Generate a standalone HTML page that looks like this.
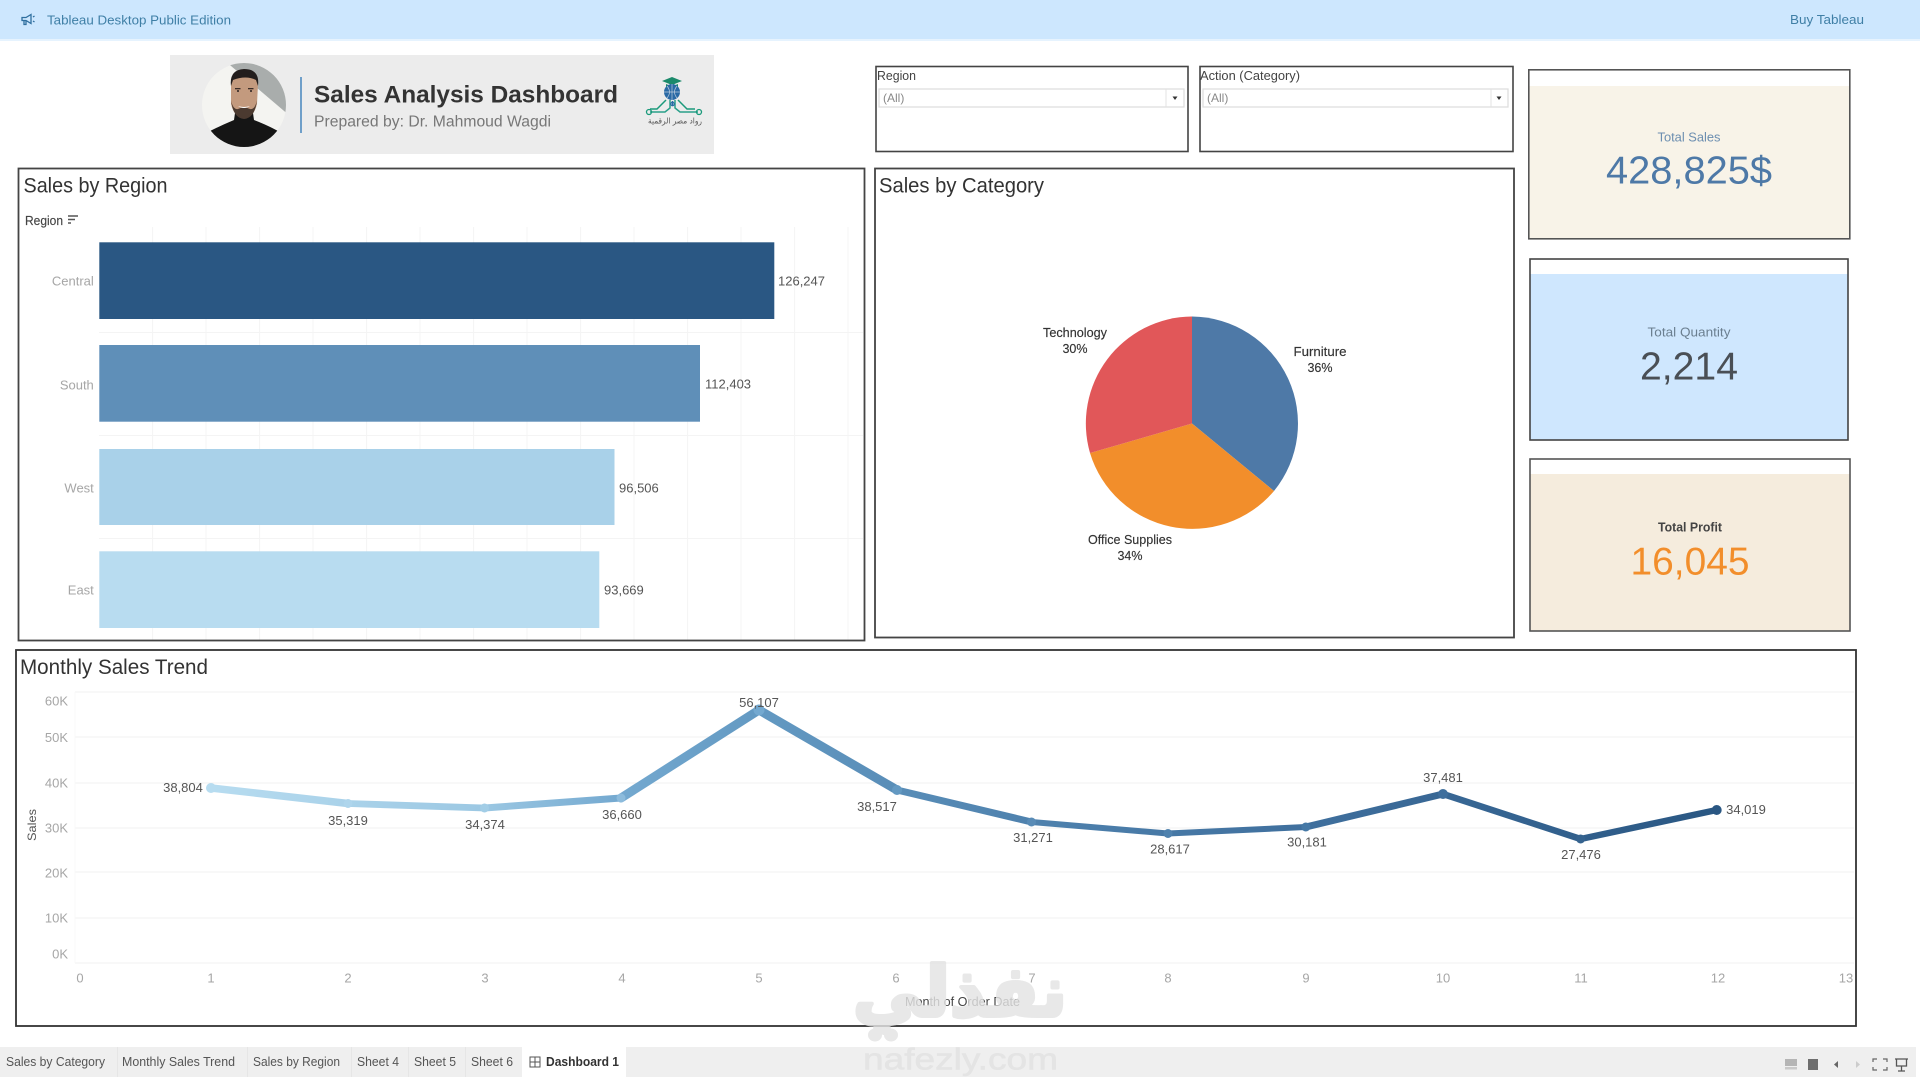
<!DOCTYPE html>
<html lang="en"><head><meta charset="utf-8"><title>Dashboard 1</title>
<style>
html,body{margin:0;padding:0;background:#fff;width:1920px;height:1077px;overflow:hidden}
svg{display:block;font-family:"Liberation Sans",sans-serif;filter:blur(.35px)}
text{dominant-baseline:central}
.m{text-anchor:middle}.e{text-anchor:end}
.t{font-size:21px;fill:#333}
.v{font-size:13px;fill:#555}
.a{font-size:13px;fill:#a6a6a6}
.p{font-size:12.5px;fill:#333;text-anchor:middle;stroke:#333;stroke-width:.15}
.tab{font-size:12.5px;fill:#555}
</style></head><body>
<svg width="1920" height="1077" viewBox="0 0 1920 1077" xmlns="http://www.w3.org/2000/svg">
<defs>
<linearGradient id="lg" gradientUnits="userSpaceOnUse" x1="211" y1="0" x2="1717" y2="0">
<stop offset="0" stop-color="#b7dcf0"/><stop offset=".18" stop-color="#9cc8e3"/><stop offset=".27" stop-color="#74a9d0"/><stop offset=".365" stop-color="#6399c2"/><stop offset=".54" stop-color="#4f82ae"/><stop offset=".73" stop-color="#3f6f9d"/><stop offset="1" stop-color="#2a5783"/>
</linearGradient>
<clipPath id="cp"><circle cx="244" cy="105" r="42"/></clipPath>
</defs>

<rect width="1920" height="39" fill="#cde7fe"/>
<rect y="39" width="1920" height="2" fill="#e6f3fe"/>
<g fill="none" stroke="#2f6f9f" stroke-width="1.3"><path d="M22 17.5h4l5-3v9l-5-3h-4zM24 20.5v4h2v-4M33 17l1.5-1M33 21l1.5 1"/></g>
<text x="47" y="20" textLength="184" lengthAdjust="spacingAndGlyphs" font-size="13" fill="#3f7fa6">Tableau Desktop Public Edition</text>
<text x="1790" y="19.500" textLength="74" lengthAdjust="spacingAndGlyphs" font-size="13" fill="#3f7fa6">Buy Tableau</text>

<!-- banner -->
<rect x="170" y="55" width="544" height="99" fill="#ececec"/>
<g clip-path="url(#cp)">
<rect x="200" y="60" width="90" height="90" fill="#f4f4f1"/>
<path d="M224 60L290 116V60Z" fill="#a9adac"/>
<path d="M205 150L210 131Q222 125 234 120L235 113H253L254 120Q267 125 278 131L284 150Z" fill="#151515"/>
<path d="M231 84Q231 72 244 72Q258 72 258 84L257 104Q254 117 244 118Q234 117 231 104Z" fill="#c39a7e"/>
<path d="M231 100Q233 118 244 119Q255 118 257 100Q255 110 250 109Q244 106 238 109Q233 110 231 100Z" fill="#4b3a30"/>
<path d="M231 86Q229 70 244 69Q260 69 258 86L256 80Q246 75 233 80Z" fill="#231e1d"/>
<path d="M238 106Q244 110 250 106Q244 108 238 106Z" fill="#fff"/>
<rect x="235" y="88" width="5.500" height="1.300" fill="#3a2c26"/><rect x="248" y="88" width="5.500" height="1.300" fill="#3a2c26"/>
<circle cx="238" cy="91" r="1" fill="#2a2020"/><circle cx="251" cy="91" r="1" fill="#2a2020"/>
</g>
<rect x="300" y="77" width="2" height="56" fill="#6f9fc9"/>
<text x="314" y="95" textLength="304" lengthAdjust="spacingAndGlyphs" font-size="24" font-weight="700" fill="#333">Sales Analysis Dashboard</text>
<text x="314" y="122" textLength="237" lengthAdjust="spacingAndGlyphs" font-size="15.500" fill="#777">Prepared by: Dr. Mahmoud Wagdi</text>
<!-- logo -->
<g>
<path d="M662 81L672 77L682 81L672 85Z" fill="#1b8a6b"/><path d="M666 84v3h12v-3l-6 2.500z" fill="#1b8a6b"/>
<circle cx="672" cy="92" r="8" fill="#2a6aa5"/>
<path d="M664 92h16M672 84v16M667 86q5 6 0 12M677 86q-5 6 0 12" stroke="#bcd" stroke-width=".7" fill="none"/>
<g fill="none" stroke-width="1.500"><path d="M666 100L657 109H650" stroke="#1b9a7b"/><path d="M678 100L687 109H695" stroke="#1b9a7b"/><path d="M670 100V108L665 112H650" stroke="#29a08a"/><path d="M675 100V108L680 112H698" stroke="#29a08a"/><path d="M672.500 101V106" stroke="#2a6aa5"/></g>
<circle cx="649" cy="112" r="2.500" fill="none" stroke="#1b9a7b" stroke-width="1.300"/><circle cx="699" cy="112" r="2.500" fill="none" stroke="#1b9a7b" stroke-width="1.300"/><circle cx="672.500" cy="104" r="1.800" fill="none" stroke="#2a6aa5" stroke-width="1.100"/>
<text x="675" y="121" class="m" font-size="8" fill="#555" textLength="54" lengthAdjust="spacingAndGlyphs" style="font-family:'DejaVu Sans',sans-serif">رواد مصر الرقمية</text>
</g>

<!-- filters -->
<g fill="#fff" stroke="#444" stroke-width="1.600"><rect x="876" y="66.500" width="312" height="85"/><rect x="1200" y="66.500" width="313" height="85"/></g>
<text x="877" y="76" textLength="39" lengthAdjust="spacingAndGlyphs" font-size="12.500" fill="#444">Region</text>
<text x="1200" y="76" textLength="100" lengthAdjust="spacingAndGlyphs" font-size="12.500" fill="#444">Action (Category)</text>
<g fill="#fff" stroke="#dcdcdc" stroke-width="1.200"><rect x="879" y="89" width="305" height="18"/><rect x="1203" y="89" width="305" height="18"/></g>
<path d="M1166 89v18M1491 89v18" stroke="#e3e3e3"/>
<path d="M1172.500 96.500h5l-2.500 3.500zM1496.500 96.500h5l-2.500 3.500z" fill="#333"/>
<text x="883" y="98" font-size="12" fill="#888">(All)</text><text x="1207" y="98" font-size="12" fill="#888">(All)</text>

<!-- KPI cards -->
<rect x="1529" y="86" width="321" height="152" fill="#f8f3e8"/>
<rect x="1528.800" y="69.800" width="321" height="169" fill="none" stroke="#555" stroke-width="1.600"/>
<text x="1689" y="137" class="m" font-size="13" fill="#6c8eb0" textLength="63" lengthAdjust="spacingAndGlyphs">Total Sales</text>
<text x="1689" y="171" class="m" font-size="39" fill="#4e79a7" textLength="166" lengthAdjust="spacingAndGlyphs">428,825$</text>

<rect x="1530" y="274" width="318" height="166" fill="#cfe7fe"/>
<rect x="1530" y="259" width="318" height="181" fill="none" stroke="#444" stroke-width="1.600"/>
<text x="1689" y="332" class="m" font-size="13" fill="#6b7f90" textLength="83" lengthAdjust="spacingAndGlyphs">Total Quantity</text>
<text x="1689" y="367" class="m" font-size="39" fill="#4a4f55" textLength="98" lengthAdjust="spacingAndGlyphs">2,214</text>

<rect x="1530" y="474" width="320" height="157" fill="#f5ecdd"/>
<rect x="1530" y="459" width="320" height="172" fill="none" stroke="#555" stroke-width="1.600"/>
<text x="1690" y="527" class="m" font-size="13" font-weight="700" fill="#444" textLength="64" lengthAdjust="spacingAndGlyphs">Total Profit</text>
<text x="1690" y="562" class="m" font-size="39" fill="#f28e2b" textLength="119" lengthAdjust="spacingAndGlyphs">16,045</text>

<!-- Sales by Region -->
<g stroke="#f4f4f4" stroke-width="1">
<path d="M152.600 227V640M206 227V640M259.600 227V640M313 227V640M366.600 227V640M420 227V640M473.600 227V640M527 227V640M580.600 227V640M634 227V640M687.600 227V640M741 227V640M794.600 227V640M848 227V640"/>
<path d="M99 332.500H863M99 435.500H863M99 538.500H863"/>
</g>
<rect x="99.300" y="242.300" width="675" height="76.700" fill="#2a5783"/>
<rect x="99.300" y="345" width="600.700" height="76.700" fill="#5f8fb8"/>
<rect x="99.300" y="449" width="515.200" height="76" fill="#a9d1e9"/>
<rect x="99.300" y="551.300" width="500" height="76.700" fill="#b8dcf0"/>
<rect x="18.500" y="168.500" width="846" height="472" fill="none" stroke="#444" stroke-width="1.800"/>
<text x="23.500" y="186" class="t" textLength="144" lengthAdjust="spacingAndGlyphs">Sales by Region</text>
<text x="25" y="221" font-size="12.500" fill="#444" textLength="38" lengthAdjust="spacingAndGlyphs" stroke="#444" stroke-width=".15">Region</text>
<path d="M68 216h10M68 219.500h7M68 223h3" stroke="#555" stroke-width="1.500"/>
<g class="a"><text x="93.800" y="281" class="a e">Central</text><text x="93.800" y="385" class="a e">South</text><text x="93.800" y="488" class="a e">West</text><text x="93.800" y="590" class="a e">East</text></g>
<text x="778" y="281" class="v">126,247</text><text x="705" y="384" class="v">112,403</text><text x="619" y="488" class="v">96,506</text><text x="604" y="590" class="v">93,669</text>

<!-- Sales by Category -->
<rect x="875" y="168.500" width="639" height="469" fill="none" stroke="#444" stroke-width="1.800"/>
<text x="879" y="186" class="t" textLength="165" lengthAdjust="spacingAndGlyphs">Sales by Category</text>
<path d="M1192 423.500V316.500A107 107 0 0 1 1274 491Z" fill="#4e79a7"/>
<path d="M1192 423.500L1274 491A107 107 0 0 1 1090 453Z" fill="#f28e2b"/>
<path d="M1192 423.500L1090 453A107 107 0 0 1 1192 316.500Z" fill="#e15759"/>
<text x="1075" y="333" class="p" textLength="64" lengthAdjust="spacingAndGlyphs">Technology</text><text x="1075" y="349" class="p">30%</text>
<text x="1320" y="352" class="p" textLength="53" lengthAdjust="spacingAndGlyphs">Furniture</text><text x="1320" y="368" class="p">36%</text>
<text x="1130" y="540" class="p" textLength="84" lengthAdjust="spacingAndGlyphs">Office Supplies</text><text x="1130" y="556" class="p">34%</text>

<!-- Lower section -->
<g transform="translate(0 -3)">
<rect x="16" y="653" width="1840" height="376" fill="none" stroke="#333" stroke-width="1.800"/>
<text x="20" y="670.500" class="t" textLength="188" lengthAdjust="spacingAndGlyphs" fill="#333">Monthly Sales Trend</text>
<g stroke="#f3f3f3" stroke-width="1.200"><path d="M75 695H1854M75 740H1854M75 786H1854M75 831H1854M75 875H1854M75 921H1854M75 966H1854"/></g>
<path d="M75 695V966" stroke="#f8f8f8"/>
<g class="a">
<text x="68" y="704" class="a e">60K</text><text x="68" y="740.500" class="a e">50K</text><text x="68" y="786" class="a e">40K</text><text x="68" y="831" class="a e">30K</text><text x="68" y="876" class="a e">20K</text><text x="68" y="921" class="a e">10K</text><text x="68" y="957" class="a e">0K</text>
</g>
<text transform="translate(32 828) rotate(-90)" class="m" font-size="12" fill="#555" textLength="32" lengthAdjust="spacingAndGlyphs">Sales</text>
<g class="a">
<text x="80" y="981" class="a m">0</text><text x="211" y="981" class="a m">1</text><text x="348" y="981" class="a m">2</text><text x="485" y="981" class="a m">3</text><text x="622" y="981" class="a m">4</text><text x="759" y="981" class="a m">5</text><text x="896" y="981" class="a m">6</text><text x="1032" y="981" class="a m">7</text><text x="1168" y="981" class="a m">8</text><text x="1306" y="981" class="a m">9</text><text x="1443" y="981" class="a m">10</text><text x="1581" y="981" class="a m">11</text><text x="1718" y="981" class="a m">12</text><text x="1846" y="981" class="a m">13</text>
</g>
<g fill="none" stroke="url(#lg)" stroke-linecap="round">
<path d="M211 791L348 806.500" stroke-width="7.500"/>
<path d="M348 806.500L484.500 811" stroke-width="6.800"/>
<path d="M484.500 811L621 801" stroke-width="7"/>
<path d="M621 801L759 713" stroke-width="9"/>
<path d="M759 713L897 793" stroke-width="9"/>
<path d="M897 793L1031.500 825" stroke-width="7"/>
<path d="M1031.500 825L1168 836.500" stroke-width="6"/>
<path d="M1168 836.500L1305.800 830" stroke-width="6"/>
<path d="M1305.800 830L1443 797" stroke-width="7"/>
<path d="M1443 797L1580.600 842" stroke-width="6.500"/>
<path d="M1580.600 842L1716.700 813" stroke-width="6.500"/>
</g>
<g>
<circle cx="211" cy="791" r="5" fill="#b7dcf0"/><circle cx="348" cy="806.500" r="4.500" fill="#aed5ec"/><circle cx="484.500" cy="811" r="4.500" fill="#a2cde6"/><circle cx="621" cy="801" r="4.500" fill="#8cbbdc"/><circle cx="759" cy="713" r="5.500" fill="#74a9d0"/><circle cx="897" cy="793" r="5" fill="#6399c2"/><circle cx="1031.500" cy="825" r="4.500" fill="#588bb6"/><circle cx="1168" cy="836.500" r="4.500" fill="#4f82ae"/><circle cx="1305.800" cy="830" r="4.500" fill="#4679a6"/><circle cx="1443" cy="797" r="5" fill="#3f6f9d"/><circle cx="1580.600" cy="842" r="4.500" fill="#35638f"/><circle cx="1716.700" cy="813" r="5" fill="#2a5783"/>
</g>
<g class="v">
<text x="183" y="790.500" class="v m">38,804</text><text x="348" y="823.500" class="v m">35,319</text><text x="485" y="827.500" class="v m">34,374</text><text x="622" y="817.500" class="v m">36,660</text><text x="759" y="705.500" class="v m">56,107</text><text x="877" y="809.500" class="v m">38,517</text><text x="1033" y="840.500" class="v m">31,271</text><text x="1170" y="852" class="v m">28,617</text><text x="1307" y="845" class="v m">30,181</text><text x="1443" y="780.500" class="v m">37,481</text><text x="1581" y="857.500" class="v m">27,476</text><text x="1746" y="812.500" class="v m">34,019</text>
</g>
<text x="905" y="1005" font-size="12.500" fill="#444" textLength="115" lengthAdjust="spacingAndGlyphs">Month of Order Date</text>

<!-- Tab bar -->
<rect y="1050" width="1916" height="30" fill="#efefef"/>
<path d="M117.500 1050v30M247.500 1050v30M351.500 1050v30M408.500 1050v30M465.500 1050v30" stroke="#e6e6e6"/>
<rect x="522" y="1050" width="104" height="30" fill="#fff"/>
<text x="6" y="1065" class="tab" textLength="99" lengthAdjust="spacingAndGlyphs">Sales by Category</text>
<text x="122" y="1065" class="tab" textLength="113" lengthAdjust="spacingAndGlyphs">Monthly Sales Trend</text>
<text x="253" y="1065" class="tab" textLength="87" lengthAdjust="spacingAndGlyphs">Sales by Region</text>
<text x="357" y="1065" class="tab" textLength="42" lengthAdjust="spacingAndGlyphs">Sheet 4</text>
<text x="414" y="1065" class="tab" textLength="42" lengthAdjust="spacingAndGlyphs">Sheet 5</text>
<text x="471" y="1065" class="tab" textLength="42" lengthAdjust="spacingAndGlyphs">Sheet 6</text>
<path d="M530 1060h10v10h-10zM535 1060v10M530 1065h10" fill="none" stroke="#555"/>
<text x="546" y="1065" class="tab" textLength="73" lengthAdjust="spacingAndGlyphs" font-weight="700" style="fill:#333">Dashboard 1</text>
</g>
<g transform="translate(0 0)">
<rect x="1785" y="1059" width="12" height="7" fill="#b5b5b5"/><rect x="1785" y="1067" width="12" height="2.500" fill="#c9c9c9"/>
<rect x="1808" y="1059" width="10" height="11" fill="#6e6e6e"/>
<path d="M1838 1061v7l-4-3.500z" fill="#666"/><path d="M1856 1061v7l4-3.500z" fill="#ccc"/>
<path d="M1873 1062v-3h4M1883 1059h4v3M1887 1067v3h-4M1877 1070h-4v-3" fill="none" stroke="#666" stroke-width="1.200"/>
<path d="M1895 1059h13M1896.500 1059v7h10v-7M1901.500 1066v5M1898 1071h7" fill="none" stroke="#555" stroke-width="1.300"/>
</g>

<!-- watermark -->
<g opacity=".82">
<text x="1067" y="992" textLength="214" lengthAdjust="spacingAndGlyphs" font-size="70" font-weight="700" direction="rtl" fill="#e3e3e3" stroke="#e3e3e3" stroke-width="4" stroke-linejoin="round" style="font-family:'DejaVu Sans',sans-serif">نفذلي</text>
<ellipse cx="875" cy="1035" rx="7" ry="6.500" fill="#e3e3e3"/><ellipse cx="891" cy="1035" rx="7" ry="6.500" fill="#e3e3e3"/>
<text x="863" y="1059" textLength="195" lengthAdjust="spacingAndGlyphs" font-size="31" fill="#e2e2e2" stroke="#e2e2e2" stroke-width=".6">nafezly.com</text>
</g>
</svg>
</body></html>
